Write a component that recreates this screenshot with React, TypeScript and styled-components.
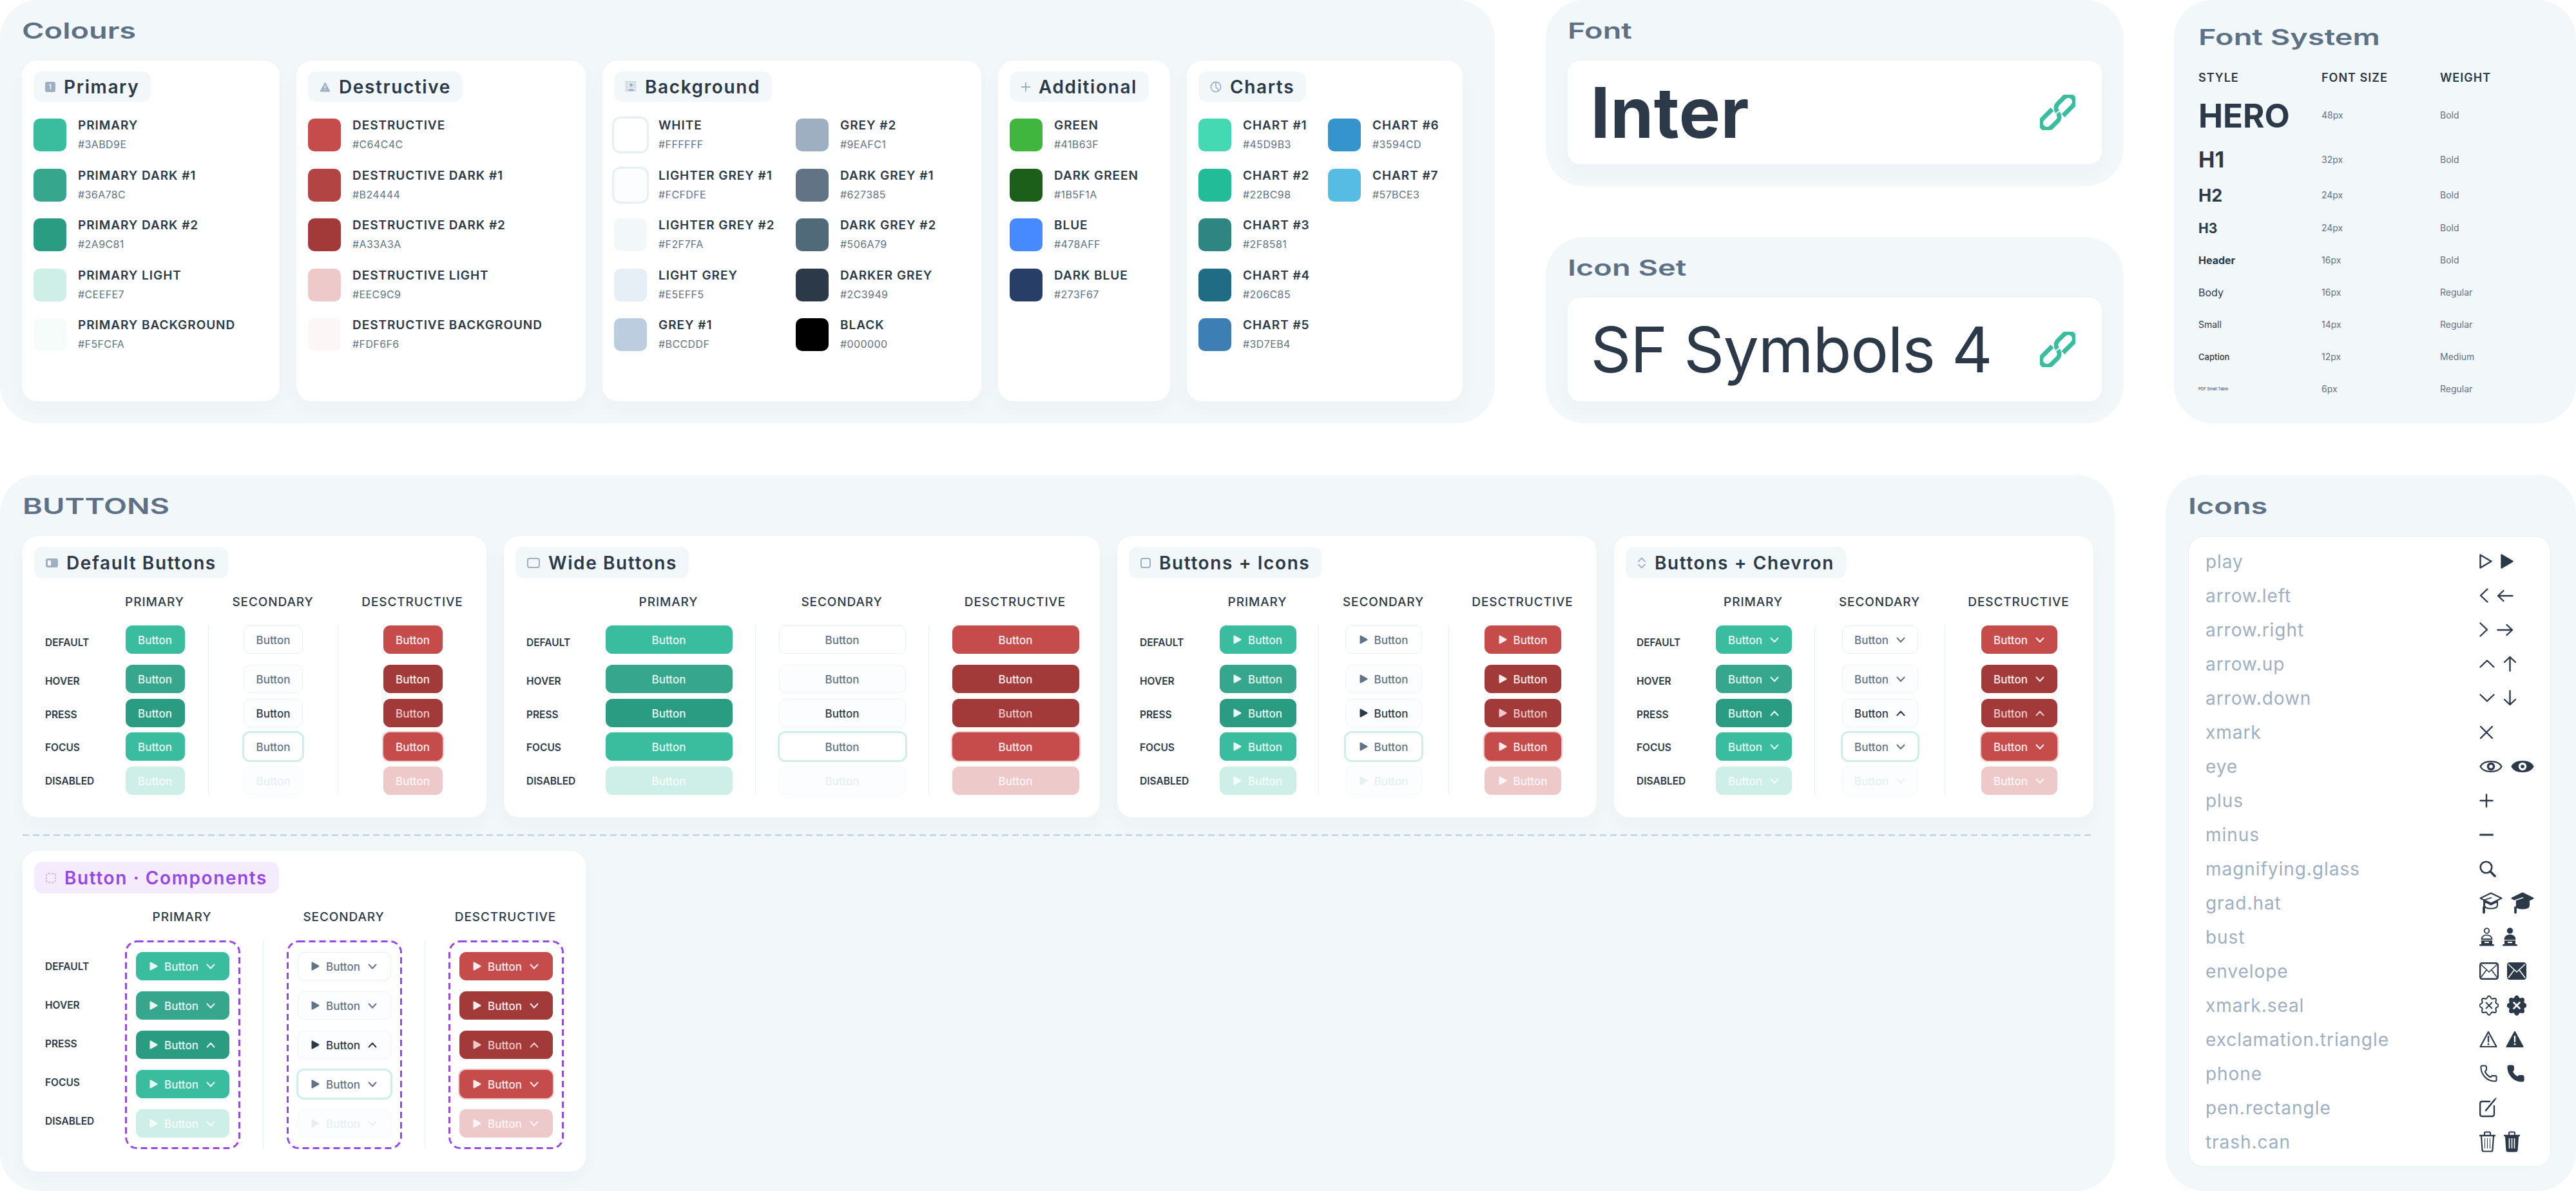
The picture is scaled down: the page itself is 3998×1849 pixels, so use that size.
import React from "react";
import styled, { createGlobalStyle } from "styled-components";
import { Phone } from "lucide-react";

const INK = "#2C3949";
const SLATE = "#627385";
const MUTED = "#9EAFC1";
const PANEL = "#F2F7FA";
const LINE = "#E5EFF5";
const FONT = `Inter, "Noto Sans", sans-serif`;

const GlobalStyle = createGlobalStyle`
  html, body {
    margin: 0;
    padding: 0;
    background: #ffffff;
    font-family: ${FONT};
  }
  * { box-sizing: border-box; }
`;

const Page = styled.div`
  width: 3998px;
  height: 1849px;
  overflow: hidden;
  background: #ffffff;
  display: flex;
  flex-direction: column;
  gap: 80px;
`;

const TopRow = styled.div`
  display: flex;
  justify-content: space-between;
  height: 657px;
`;

const BottomRow = styled.div`
  display: flex;
  justify-content: space-between;
  height: 1112px;
`;

const Panel = styled.section<{ $w: number; $pad?: string }>`
  width: ${(p) => p.$w}px;
  background: ${PANEL};
  border-radius: 60px;
  padding: ${(p) => p.$pad || "35px"};
  flex-shrink: 0;
`;

const PanelTitle = styled.h2<{ $gap?: number }>`
  margin: 0 0 ${(p) => p.$gap ?? 34}px;
  font: 600 34px/25px ${FONT};
  color: #5d7186;
  transform: scaleX(1.38);
  transform-origin: left center;
  white-space: nowrap;
`;

const CardRow = styled.div<{ $gap: number }>`
  display: flex;
  gap: ${(p) => p.$gap}px;
`;

const Card = styled.div<{ $w: number; $h: number }>`
  width: ${(p) => p.$w}px;
  height: ${(p) => p.$h}px;
  background: #ffffff;
  border-radius: 24px;
  padding: 17px 18px;
  box-shadow: 0 12px 30px rgba(44, 57, 73, 0.03);
  flex-shrink: 0;
`;

const Tab = styled.div<{ $accent?: boolean; $h?: number }>`
  display: inline-flex;
  align-items: center;
  gap: 13px;
  height: ${(p) => p.$h ?? 47}px;
  padding: 0 18px;
  border-radius: 13px;
  background: ${(p) => (p.$accent ? "#F4ECFD" : PANEL)};
  color: ${(p) => (p.$accent ? "#9747E8" : INK)};
  font: 600 28px/1 ${FONT};
  letter-spacing: 1.6px;
  white-space: nowrap;
`;

const TabIcon = styled.svg<{ $accent?: boolean }>`
  color: ${(p) => (p.$accent ? "#C9A5F2" : MUTED)};
  flex-shrink: 0;
`;

const SwatchGrid = styled.div<{ $col?: number }>`
  display: grid;
  grid-template-rows: repeat(5, 51px);
  grid-auto-flow: column;
  grid-auto-columns: ${(p) => p.$col ?? 300}px;
  row-gap: 26.5px;
  margin-top: 26px;
`;

const SwatchRow = styled.div`
  display: flex;
  align-items: center;
  gap: 18px;
`;

const Swatch = styled.div<{ $color: string; $ring?: boolean }>`
  width: 51px;
  height: 51px;
  border-radius: 10px;
  background: ${(p) => p.$color};
  box-shadow: ${(p) => (p.$ring ? `0 0 0 3px ${LINE}` : "none")};
  flex-shrink: 0;
`;

const SwatchText = styled.div`
  display: flex;
  flex-direction: column;
  gap: 9px;
`;

const SwatchName = styled.div`
  font: 600 19px/20px ${FONT};
  letter-spacing: 0.95px;
  color: ${INK};
  white-space: nowrap;
`;

const SwatchHex = styled.div`
  font: 400 16px/20px ${FONT};
  letter-spacing: 0.4px;
  color: ${SLATE};
`;

const StackedPanels = styled.div`
  display: flex;
  flex-direction: column;
  gap: 79px;
  width: 897px;
`;

const LinkCard = styled.div`
  height: 161px;
  background: #ffffff;
  border-radius: 20px;
  padding: 0 41px 0 36px;
  display: flex;
  align-items: center;
  justify-content: space-between;
  box-shadow: 0 12px 30px rgba(44, 57, 73, 0.03);
`;

const BigText = styled.div<{ $bold?: boolean }>`
  font: ${(p) => (p.$bold ? 700 : 400)} ${(p) => (p.$bold ? 108 : 98)}px/1 ${FONT};
  letter-spacing: ${(p) => (p.$bold ? 0.4 : -1.2)}px;
  color: ${INK};
  white-space: nowrap;
`;

const TypeRow = styled.div<{ $h: number }>`
  display: grid;
  grid-template-columns: 191px 184px 1fr;
  align-items: center;
  height: ${(p) => p.$h}px;
`;

const TypeHead = styled.div`
  font: 600 18px/1 ${FONT};
  letter-spacing: 1px;
  color: ${INK};
`;

const TypeSample = styled.div<{ $size: number; $weight: number }>`
  font: ${(p) => p.$weight} ${(p) => p.$size}px/1 ${FONT};
  color: ${INK};
  white-space: nowrap;
`;

const TypeValue = styled.div`
  font: 400 14px/1 ${FONT};
  color: ${SLATE};
`;

const Divider = styled.div`
  height: 3px;
  background: repeating-linear-gradient(90deg, #c7d8e8 0 10px, transparent 10px 16px);
  margin: 26px 0 23px;
  width: 3214px;
`;

const ButtonCard = styled(Card)`
  padding-top: 17px;
`;

const Table = styled.div<{ $top: number }>`
  display: flex;
  margin-top: ${(p) => p.$top}px;
  padding-left: 17px;
`;

const LabelCol = styled.div<{ $w: number }>`
  width: ${(p) => p.$w}px;
  flex-shrink: 0;
`;

const Col = styled.div<{ $w: number }>`
  width: ${(p) => p.$w}px;
  flex-shrink: 0;
`;

const ColHead = styled.div`
  height: 26px;
  margin-bottom: 23px;
  font: 500 19px/26px ${FONT};
  letter-spacing: 0.9px;
  color: ${INK};
  text-align: center;
  white-space: nowrap;
`;

const ButtonStack = styled.div<{ $divider?: boolean }>`
  display: grid;
  grid-template-rows: 61px 53px 52px 53px 44px;
  justify-items: center;
  align-items: start;
  border-left: ${(p) => (p.$divider ? `1px solid ${LINE}` : "1px solid transparent")};
`;

const ComponentCol = styled.div<{ $divider?: boolean }>`
  display: flex;
  justify-content: center;
  border-left: ${(p) => (p.$divider ? `1px solid ${LINE}` : "1px solid transparent")};
`;

const DashedBox = styled.div`
  position: relative;
  width: 179px;
  height: 324px;
  padding: 18px 0;
  display: grid;
  grid-auto-rows: 44px;
  row-gap: 17px;
  justify-items: center;
`;

const DashedOutline = styled.svg`
  position: absolute;
  inset: 0;
  pointer-events: none;
`;

const StateLabels = styled.div`
  display: grid;
  grid-template-rows: 61px 53px 52px 53px 44px;
`;

const StateLabel = styled.div<{ $shift: number }>`
  font: 600 15.5px/18px ${FONT};
  color: ${INK};
  padding-top: ${(p) => 13 + p.$shift}px;
  white-space: nowrap;
`;

const ComponentLabels = styled.div`
  display: grid;
  grid-auto-rows: 60px;
  padding-top: 11px;
`;

const ComponentLabel = styled.div`
  font: 600 15.5px/60px ${FONT};
  color: ${INK};
`;

type Kind = "primary" | "secondary" | "destructive";
type State = "default" | "hover" | "press" | "focus" | "disabled";
type Look = { bg: string; fg: string; border: string; ring: string };

const LOOKS: Record<Kind, Record<State, Look>> = {
  primary: {
    default: { bg: "#3ABD9E", fg: "#E9F8F4", border: "#3ABD9E", ring: "none" },
    hover: { bg: "#36A78C", fg: "#E9F8F4", border: "#36A78C", ring: "none" },
    press: { bg: "#2A9C81", fg: "#E9F8F4", border: "#2A9C81", ring: "none" },
    focus: { bg: "#3ABD9E", fg: "#E9F8F4", border: "#3ABD9E", ring: "0 0 0 2px #F5FCFA" },
    disabled: { bg: "#CEEFE7", fg: "#F5FCFA", border: "#CEEFE7", ring: "none" },
  },
  secondary: {
    default: { bg: "#FFFFFF", fg: SLATE, border: LINE, ring: "none" },
    hover: { bg: "#FCFDFE", fg: SLATE, border: "#EDF3F7", ring: "none" },
    press: { bg: "#FCFDFE", fg: INK, border: "#EDF3F7", ring: "none" },
    focus: { bg: "#FFFFFF", fg: SLATE, border: "#CEEFE7", ring: "0 0 0 2px #CEEFE7" },
    disabled: { bg: "#FCFDFE", fg: LINE, border: "#F5F8FA", ring: "none" },
  },
  destructive: {
    default: { bg: "#C64C4C", fg: "#FBEDED", border: "#C64C4C", ring: "none" },
    hover: { bg: "#A33A3A", fg: "#FBEDED", border: "#A33A3A", ring: "none" },
    press: { bg: "#A33A3A", fg: "#EEC9C9", border: "#A33A3A", ring: "none" },
    focus: { bg: "#C64C4C", fg: "#FBEDED", border: "#C64C4C", ring: "0 0 0 2px #EEC9C9" },
    disabled: { bg: "#EEC9C9", fg: "#FDF6F6", border: "#EEC9C9", ring: "none" },
  },
};

const Btn = styled.div<{ $look: Look; $w: number }>`
  width: ${(p) => p.$w}px;
  height: 44px;
  padding-top: 3px;
  display: flex;
  align-items: center;
  justify-content: center;
  border-radius: 10px;
  border: 1.5px solid ${(p) => p.$look.border};
  background: ${(p) => p.$look.bg};
  color: ${(p) => p.$look.fg};
  box-shadow: ${(p) => p.$look.ring};
  font: 500 17px/1 ${FONT};
`;

const BtnPlay = styled.svg`
  margin: -3px 10px 0 0;
  flex-shrink: 0;
`;

const BtnChevron = styled.svg`
  margin: -3px 0 0 12px;
  flex-shrink: 0;
`;

const IconCard = styled.div`
  width: 563px;
  height: 980px;
  background: #ffffff;
  border: 1px solid ${LINE};
  border-radius: 24px;
  padding: 12px 0 0 26px;
`;

const IconRowLine = styled.div`
  display: grid;
  grid-template-columns: 425px 1fr;
  align-items: center;
  height: 53px;
`;

const IconName = styled.div`
  font: 400 28px/1 ${FONT};
  letter-spacing: 0.95px;
  color: ${MUTED};
`;

const IconGroup = styled.div`
  display: flex;
  align-items: center;
  gap: 13px;
  color: ${INK};
`;

const RowSvg = styled.svg`
  display: block;
  flex-shrink: 0;
`;

const FillPlay = () => (
  <BtnPlay width="13" height="14" viewBox="0 0 13 14">
    <path d="M1.5 1.5 L11.5 7 L1.5 12.5 Z" fill="currentColor" stroke="currentColor" strokeWidth="2" strokeLinejoin="round" />
  </BtnPlay>
);

const Chevron = ({ up }: { up: boolean }) => (
  <BtnChevron width="14" height="9" viewBox="0 0 14 9">
    <path d={up ? "M1.5 7.5 L7 1.5 L12.5 7.5" : "M1.5 1.5 L7 7.5 L12.5 1.5"} fill="none" stroke="currentColor" strokeWidth="2" strokeLinecap="round" strokeLinejoin="round" />
  </BtnChevron>
);

type BtnProps = { kind: Kind; state: State; w: number; play?: boolean; chevron?: boolean };

const DemoButton = ({ kind, state, w, play, chevron }: BtnProps) => (
  <Btn $look={LOOKS[kind][state]} $w={w}>
    {play && <FillPlay />}
    Button
    {chevron && <Chevron up={state === "press"} />}
  </Btn>
);

const STATES: State[] = ["default", "hover", "press", "focus", "disabled"];
const STATE_SHIFT = [5, 4, 3, 2, 1];
const COLUMNS: { kind: Kind; title: string }[] = [
  { kind: "primary", title: "PRIMARY" },
  { kind: "secondary", title: "SECONDARY" },
  { kind: "destructive", title: "DESCTRUCTIVE" },
];

type TableProps = { label: number; cols: number[]; btn: number; play?: boolean; chevron?: boolean };

const ButtonTable = ({ label, cols, btn, play, chevron }: TableProps) => (
  <Table $top={24}>
    <LabelCol $w={label}>
      <ColHead />
      <StateLabels>
        {STATES.map((s, i) => (
          <StateLabel key={s} $shift={STATE_SHIFT[i]}>
            {s.toUpperCase()}
          </StateLabel>
        ))}
      </StateLabels>
    </LabelCol>
    {COLUMNS.map((c, i) => (
      <Col key={c.kind} $w={cols[i]}>
        <ColHead>{c.title}</ColHead>
        <ButtonStack $divider={i > 0}>
          {STATES.map((s) => (
            <DemoButton key={s} kind={c.kind} state={s} w={btn} play={play} chevron={chevron} />
          ))}
        </ButtonStack>
      </Col>
    ))}
  </Table>
);

const ComponentTable = () => (
  <Table $top={24}>
    <LabelCol $w={87}>
      <ColHead />
      <ComponentLabels>
        {STATES.map((s) => (
          <ComponentLabel key={s}>{s.toUpperCase()}</ComponentLabel>
        ))}
      </ComponentLabels>
    </LabelCol>
    {COLUMNS.map((c, i) => (
      <Col key={c.kind} $w={251}>
        <ColHead>{c.title}</ColHead>
        <ComponentCol $divider={i > 0}>
          <DashedBox>
            <DashedOutline width="179" height="324" viewBox="0 0 179 324" fill="none">
              <rect x="1.5" y="1.5" width="176" height="321" rx="17" stroke="#9747E8" strokeWidth="3" strokeDasharray="10 6" />
            </DashedOutline>
            {STATES.map((s) => (
              <DemoButton key={s} kind={c.kind} state={s} w={145} play chevron />
            ))}
          </DashedBox>
        </ComponentCol>
      </Col>
    ))}
  </Table>
);

// two open chain links, drawn upright and then turned 45 degrees
const LinkIcon = () => (
  <svg width="55" height="55" viewBox="0 0 54 55" fill="none" stroke="#3ABD9E" strokeWidth="7">
    <g transform="rotate(45 27 27.5)">
      <path d="M36.5 25 V4 A9.5 9.5 0 0 0 17.5 4 V18 A9.5 9.5 0 0 0 26 27" />
      <path d="M17.5 30 V51 A9.5 9.5 0 0 0 36.5 51 V37 A9.5 9.5 0 0 0 28 28" />
    </g>
  </svg>
);

// small grey icons that sit in the card tabs
const tabIcons: Record<string, React.ReactNode> = {
  one: (
    <TabIcon width="16" height="16" viewBox="0 0 16 16">
      <rect width="16" height="16" rx="3" fill="currentColor" />
      <path d="M6.5 5.5 L8.5 4.5 V11.5" fill="none" stroke="#fff" strokeWidth="1.4" />
    </TabIcon>
  ),
  warn: (
    <TabIcon width="17" height="16" viewBox="0 0 17 16">
      <path d="M8.5 1 L16 15 H1 Z" fill="currentColor" stroke="currentColor" strokeLinejoin="round" />
      <path d="M8.5 5.5 V10 M8.5 11.5 V13" stroke="#fff" strokeWidth="1.5" />
    </TabIcon>
  ),
  person: (
    <TabIcon width="17" height="17" viewBox="0 0 17 17">
      <defs>
        <pattern id="dots" width="2.4" height="2.4" patternUnits="userSpaceOnUse">
          <rect width="1.3" height="1.3" fill="currentColor" />
        </pattern>
      </defs>
      <rect width="17" height="17" fill="url(#dots)" />
      <circle cx="8.5" cy="6" r="3.2" fill="currentColor" stroke="#F2F7FA" />
      <path d="M2.5 16 C3 10 14 10 14.5 16 Z" fill="currentColor" stroke="#F2F7FA" />
    </TabIcon>
  ),
  plus: (
    <TabIcon width="14" height="16" viewBox="0 0 14 16">
      <path d="M7 1 V15 M0 8 H14" stroke="currentColor" strokeWidth="2" />
    </TabIcon>
  ),
  pie: (
    <TabIcon width="18" height="18" viewBox="0 0 18 18" fill="none">
      <circle cx="9" cy="9" r="7.6" stroke="currentColor" strokeWidth="1.6" />
      <path d="M9 2 V9 L13.5 14.5" stroke="currentColor" strokeWidth="1.6" />
    </TabIcon>
  ),
  half: (
    <TabIcon width="19" height="14" viewBox="0 0 19 14">
      <rect width="19" height="14" rx="3" fill="currentColor" />
      <rect x="3" y="3" width="5" height="8" rx="1" fill="#fff" />
    </TabIcon>
  ),
  wide: (
    <TabIcon width="20" height="16" viewBox="0 0 20 16" fill="none">
      <rect x="1" y="1" width="18" height="14" rx="3" stroke="currentColor" strokeWidth="2" />
    </TabIcon>
  ),
  square: (
    <TabIcon width="16" height="16" viewBox="0 0 16 16" fill="none">
      <rect x="1" y="1" width="14" height="14" rx="3" stroke="currentColor" strokeWidth="2" />
    </TabIcon>
  ),
  updown: (
    <TabIcon width="14" height="18" viewBox="0 0 14 18" fill="none">
      <path d="M2 6.5 L7 1.5 L12 6.5 M2 11.5 L7 16.5 L12 11.5" stroke="currentColor" strokeWidth="1.8" strokeLinecap="round" />
    </TabIcon>
  ),
  dashed: (
    <TabIcon $accent width="16" height="16" viewBox="0 0 16 16" fill="none">
      <rect x="1" y="1" width="14" height="14" rx="3" stroke="currentColor" strokeWidth="1.6" strokeDasharray="3 2" />
    </TabIcon>
  ),
};

const sealPath = (() => {
  const pts: string[] = [];
  for (let i = 0; i < 96; i++) {
    const a = (i / 96) * Math.PI * 2;
    const r = 13 + 1.7 * Math.cos(a * 8);
    pts.push(`${(15 + r * Math.sin(a)).toFixed(2)} ${(16 + r * Math.cos(a)).toFixed(2)}`);
  }
  return `M${pts.join(" L")} Z`;
})();

const line = { fill: "none", stroke: "currentColor", strokeLinecap: "round", strokeLinejoin: "round" } as const;

const PlayIcon = ({ solid }: { solid?: boolean }) => (
  <RowSvg width="20" height="23" viewBox="0 0 20 23">
    <path d="M1.5 1.5 L18.5 11.5 L1.5 21.5 Z" {...line} strokeWidth="2.4" fill={solid ? "currentColor" : "none"} />
  </RowSvg>
);

const Stroke = ({ w, h, d, sw = 2.4 }: { w: number; h: number; d: string; sw?: number }) => (
  <RowSvg width={w} height={h} viewBox={`0 0 ${w} ${h}`}>
    <path d={d} {...line} strokeWidth={sw} />
  </RowSvg>
);

const EyeIcon = ({ solid }: { solid?: boolean }) => (
  <RowSvg width="36" height="24" viewBox="0 0 36 24">
    <path d="M1.5 12 C7 1.5 29 1.5 34.5 12 C29 22.5 7 22.5 1.5 12 Z" {...line} strokeWidth="2.2" fill={solid ? "currentColor" : "none"} />
    <circle cx="18" cy="12" r="6.2" fill={solid ? "#fff" : "currentColor"} />
    <circle cx="18" cy="12" r="2.8" fill={solid ? "currentColor" : "#fff"} />
  </RowSvg>
);

const HatIcon = ({ solid }: { solid?: boolean }) => (
  <RowSvg width="36" height="34" viewBox="0 0 36 34">
    <path d="M18 1.5 L34.5 9.5 L18 17.5 L1.5 9.5 Z" {...line} strokeWidth="2" fill={solid ? "currentColor" : "none"} />
    <path d="M8 14.5 V21 C9 27 27 27 28 21 V14.5 L18 19.5 Z" {...line} strokeWidth="2" fill={solid ? "currentColor" : "none"} />
    <path d="M19 8.5 L7 12.5 V24" fill="none" stroke={solid ? "#fff" : "currentColor"} strokeWidth={solid ? 1.6 : 1.8} />
    <path d="M7 24 V31.5" {...line} strokeWidth="3.8" />
  </RowSvg>
);

const BustIcon = ({ solid }: { solid?: boolean }) => (
  <RowSvg width="23" height="29" viewBox="0 0 23 29">
    <circle cx="11.5" cy="5" r="3.8" {...line} strokeWidth="1.8" fill={solid ? "currentColor" : "none"} />
    <path d="M3.5 18 C3.5 9.5 19.5 9.5 19.5 18 Z" {...line} strokeWidth="1.8" fill={solid ? "currentColor" : "none"} />
    <rect x="3" y="20" width="17" height="6" fill="currentColor" />
    <rect x="8" y="22" width="7" height="2" fill="#fff" />
    <rect y="26" width="23" height="2.4" rx="1" fill="currentColor" />
  </RowSvg>
);

const EnvelopeIcon = ({ solid }: { solid?: boolean }) => (
  <RowSvg width="30" height="27" viewBox="0 0 30 27">
    <rect x="1.2" y="1.2" width="27.6" height="24.6" rx="3" {...line} strokeWidth="2.4" fill={solid ? "currentColor" : "none"} />
    <path d="M2 3 L15 15 L28 3 M2 24 L11 12 M28 24 L19 12" fill="none" stroke={solid ? "#fff" : "currentColor"} strokeWidth="1.6" />
  </RowSvg>
);

const SealIcon = ({ solid }: { solid?: boolean }) => (
  <RowSvg width="30" height="32" viewBox="0 0 30 32">
    <path d={sealPath} {...line} strokeWidth="2" fill={solid ? "currentColor" : "none"} />
    <path d="M10.5 11.5 L19.5 20.5 M19.5 11.5 L10.5 20.5" fill="none" stroke={solid ? "#fff" : "currentColor"} strokeWidth={solid ? 2.6 : 1.8} strokeLinecap="round" />
  </RowSvg>
);

const TriangleIcon = ({ solid }: { solid?: boolean }) => (
  <RowSvg width="28" height="27" viewBox="0 0 28 27">
    <path d="M14 2 L26.5 25 H1.5 Z" {...line} strokeWidth="2.2" fill={solid ? "currentColor" : "none"} />
    <path d="M14 9 V17" fill="none" stroke={solid ? "#fff" : "currentColor"} strokeWidth="2.4" strokeLinecap="round" />
    <circle cx="14" cy="21" r="1.5" fill={solid ? "#fff" : "currentColor"} />
  </RowSvg>
);

const PenIcon = () => (
  <RowSvg width="27" height="31" viewBox="0 0 27 31">
    <path d="M16 6 H4 A3 3 0 0 0 1.2 9 V26 A3 3 0 0 0 4 29 H20 A3 3 0 0 0 23 26 V13" {...line} strokeWidth="2.4" />
    <path d="M10 20 L24 3" {...line} strokeWidth="2.6" />
    <path d="M25 1.5 L26 0.5" {...line} strokeWidth="1.4" />
  </RowSvg>
);

const TrashIcon = ({ solid }: { solid?: boolean }) => (
  <RowSvg width="25" height="33" viewBox="0 0 25 33">
    <path d="M8 6 V3 A1.5 1.5 0 0 1 9.5 1.5 H15.5 A1.5 1.5 0 0 1 17 3 V6" {...line} strokeWidth="2" />
    <path d="M1 7 H24" {...line} strokeWidth="2.6" />
    <path d="M3 8 L4.5 29 A2.5 2.5 0 0 0 7 31.5 H18 A2.5 2.5 0 0 0 20.5 29 L22 8" {...line} strokeWidth="2.2" fill={solid ? "currentColor" : "none"} />
    <path d="M8.5 11 V27 M12.5 11 V27 M16.5 11 V27" fill="none" stroke={solid ? "#fff" : "currentColor"} strokeWidth={solid ? 1.6 : 1} />
  </RowSvg>
);

const SearchIcon = () => (
  <RowSvg width="26" height="26" viewBox="0 0 26 26">
    <circle cx="10.5" cy="10.5" r="8.8" fill="none" stroke="currentColor" strokeWidth="2.6" />
    <path d="M17 17 L24 24" {...line} strokeWidth="3.6" />
  </RowSvg>
);

const ICON_ROWS: { name: string; icons: React.ReactNode }[] = [
  { name: "play", icons: <><PlayIcon /><PlayIcon solid /></> },
  { name: "arrow.left", icons: <><Stroke w={14} h={23} d="M12.5 1.5 L2 11.5 L12.5 21.5" /><Stroke w={26} h={20} d="M24.5 10 H2 M10.5 2 L2 10 L10.5 18" /></> },
  { name: "arrow.right", icons: <><Stroke w={14} h={23} d="M1.5 1.5 L12 11.5 L1.5 21.5" /><Stroke w={26} h={20} d="M1.5 10 H24 M15.5 2 L24 10 L15.5 18" /></> },
  { name: "arrow.up", icons: <><Stroke w={24} h={13} d="M1.5 11.5 L12 1.5 L22.5 11.5" /><Stroke w={21} h={25} d="M10.5 23.5 V2 M2 10 L10.5 2 L19 10" /></> },
  { name: "arrow.down", icons: <><Stroke w={24} h={13} d="M1.5 1.5 L12 11.5 L22.5 1.5" /><Stroke w={21} h={25} d="M10.5 1.5 V23 M2 15 L10.5 23 L19 15" /></> },
  { name: "xmark", icons: <Stroke w={22} h={22} d="M2 2 L20 20 M20 2 L2 20" /> },
  { name: "eye", icons: <><EyeIcon /><EyeIcon solid /></> },
  { name: "plus", icons: <Stroke w={22} h={22} d="M11 1.5 V20.5 M1.5 11 H20.5" /> },
  { name: "minus", icons: <Stroke w={22} h={4} d="M1.5 2 H20.5" sw={3} /> },
  { name: "magnifying.glass", icons: <SearchIcon /> },
  { name: "grad.hat", icons: <><HatIcon /><HatIcon solid /></> },
  { name: "bust", icons: <><BustIcon /><BustIcon solid /></> },
  { name: "envelope", icons: <><EnvelopeIcon /><EnvelopeIcon solid /></> },
  { name: "xmark.seal", icons: <><SealIcon /><SealIcon solid /></> },
  { name: "exclamation.triangle", icons: <><TriangleIcon /><TriangleIcon solid /></> },
  { name: "phone", icons: <><Phone size={29} strokeWidth={1.7} /><Phone size={29} strokeWidth={1.7} fill="currentColor" /></> },
  { name: "pen.rectangle", icons: <PenIcon /> },
  { name: "trash.can", icons: <><TrashIcon /><TrashIcon solid /></> },
];

type SwatchItem = [string, string, boolean?];

const COLOUR_CARDS: { title: string; icon: string; w: number; col?: number; items: SwatchItem[] }[] = [
  {
    title: "Primary",
    icon: "one",
    w: 400,
    items: [
      ["PRIMARY", "#3ABD9E"],
      ["PRIMARY DARK #1", "#36A78C"],
      ["PRIMARY DARK #2", "#2A9C81"],
      ["PRIMARY LIGHT", "#CEEFE7"],
      ["PRIMARY BACKGROUND", "#F5FCFA"],
    ],
  },
  {
    title: "Destructive",
    icon: "warn",
    w: 449,
    items: [
      ["DESTRUCTIVE", "#C64C4C"],
      ["DESTRUCTIVE DARK #1", "#B24444"],
      ["DESTRUCTIVE DARK #2", "#A33A3A"],
      ["DESTRUCTIVE LIGHT", "#EEC9C9"],
      ["DESTRUCTIVE BACKGROUND", "#FDF6F6"],
    ],
  },
  {
    title: "Background",
    icon: "person",
    w: 588,
    col: 282,
    items: [
      ["WHITE", "#FFFFFF", true],
      ["LIGHTER GREY #1", "#FCFDFE", true],
      ["LIGHTER GREY #2", "#F2F7FA"],
      ["LIGHT GREY", "#E5EFF5"],
      ["GREY #1", "#BCCDDF"],
      ["GREY #2", "#9EAFC1"],
      ["DARK GREY #1", "#627385"],
      ["DARK GREY #2", "#506A79"],
      ["DARKER GREY", "#2C3949"],
      ["BLACK", "#000000"],
    ],
  },
  {
    title: "Additional",
    icon: "plus",
    w: 267,
    items: [
      ["GREEN", "#41B63F"],
      ["DARK GREEN", "#1B5F1A"],
      ["BLUE", "#478AFF"],
      ["DARK BLUE", "#273F67"],
    ],
  },
  {
    title: "Charts",
    icon: "pie",
    w: 428,
    col: 201,
    items: [
      ["CHART #1", "#45D9B3"],
      ["CHART #2", "#22BC98"],
      ["CHART #3", "#2F8581"],
      ["CHART #4", "#206C85"],
      ["CHART #5", "#3D7EB4"],
      ["CHART #6", "#3594CD"],
      ["CHART #7", "#57BCE3"],
    ],
  },
];

const TYPE_ROWS: [string, number, number, string, string, number][] = [
  ["HERO", 51, 700, "48px", "Bold", 80],
  ["H1", 34, 700, "32px", "Bold", 58],
  ["H2", 27, 700, "24px", "Bold", 52],
  ["H3", 21, 700, "24px", "Bold", 50],
  ["Header", 16, 700, "16px", "Bold", 50],
  ["Body", 16, 400, "16px", "Regular", 50],
  ["Small", 14, 400, "14px", "Regular", 50],
  ["Caption", 13, 500, "12px", "Medium", 50],
  ["PDF Small Table", 6, 400, "6px", "Regular", 50],
];

export default function App() {
  return (
    <>
      <GlobalStyle />
      <Page>
        <TopRow>
          <Panel $w={2320} $pad="35px 34px">
            <PanelTitle>Colours</PanelTitle>
            <CardRow $gap={26}>
              {COLOUR_CARDS.map((card) => (
                <Card key={card.title} $w={card.w} $h={529}>
                  <Tab>
                    {tabIcons[card.icon]}
                    {card.title}
                  </Tab>
                  <SwatchGrid $col={card.col}>
                    {card.items.map(([name, hex, ring]) => (
                      <SwatchRow key={name}>
                        <Swatch $color={hex} $ring={ring} />
                        <SwatchText>
                          <SwatchName>{name}</SwatchName>
                          <SwatchHex>{hex}</SwatchHex>
                        </SwatchText>
                      </SwatchRow>
                    ))}
                  </SwatchGrid>
                </Card>
              ))}
            </CardRow>
          </Panel>

          <StackedPanels>
            <Panel $w={897} $pad="35px 34px 34px">
              <PanelTitle>Font</PanelTitle>
              <LinkCard>
                <BigText $bold>Inter</BigText>
                <LinkIcon />
              </LinkCard>
            </Panel>
            <Panel $w={897} $pad="35px 34px 34px">
              <PanelTitle>Icon Set</PanelTitle>
              <LinkCard>
                <BigText>SF Symbols 4</BigText>
                <LinkIcon />
              </LinkCard>
            </Panel>
          </StackedPanels>

          <Panel $w={624} $pad="45px 34px 0 38px">
            <PanelTitle $gap={33}>Font System</PanelTitle>
            <TypeRow $h={36}>
              <TypeHead>STYLE</TypeHead>
              <TypeHead>FONT SIZE</TypeHead>
              <TypeHead>WEIGHT</TypeHead>
            </TypeRow>
            {TYPE_ROWS.map(([name, size, weight, px, label, h]) => (
              <TypeRow key={name} $h={h}>
                <TypeSample $size={size} $weight={weight}>{name}</TypeSample>
                <TypeValue>{px}</TypeValue>
                <TypeValue>{label}</TypeValue>
              </TypeRow>
            ))}
          </Panel>
        </TopRow>

        <BottomRow>
          <Panel $w={3282} $pad="36px 35px 0">
            <PanelTitle>BUTTONS</PanelTitle>
            <CardRow $gap={27}>
              <ButtonCard $w={720} $h={437}>
                <Tab $h={49}>{tabIcons.half}Default Buttons</Tab>
                <ButtonTable label={87} cols={[166, 201, 232]} btn={92} />
              </ButtonCard>
              <ButtonCard $w={925} $h={437}>
                <Tab $h={49}>{tabIcons.wide}Wide Buttons</Tab>
                <ButtonTable label={86} cols={[269, 269, 269]} btn={197} />
              </ButtonCard>
              <ButtonCard $w={744} $h={437}>
                <Tab $h={49}>{tabIcons.square}Buttons + Icons</Tab>
                <ButtonTable label={88} cols={[189, 202, 230]} btn={119} play />
              </ButtonCard>
              <ButtonCard $w={744} $h={437}>
                <Tab $h={49}>{tabIcons.updown}Buttons + Chevron</Tab>
                <ButtonTable label={86} cols={[190, 202, 230]} btn={118} chevron />
              </ButtonCard>
            </CardRow>
            <Divider />
            <ButtonCard $w={874} $h={498}>
              <Tab $h={49} $accent>{tabIcons.dashed}Button · Components</Tab>
              <ComponentTable />
            </ButtonCard>
          </Panel>

          <Panel $w={637} $pad="36px 39px 0 35px">
            <PanelTitle>Icons</PanelTitle>
            <IconCard>
              {ICON_ROWS.map((row) => (
                <IconRowLine key={row.name}>
                  <IconName>{row.name}</IconName>
                  <IconGroup>{row.icons}</IconGroup>
                </IconRowLine>
              ))}
            </IconCard>
          </Panel>
        </BottomRow>
      </Page>
    </>
  );
}
